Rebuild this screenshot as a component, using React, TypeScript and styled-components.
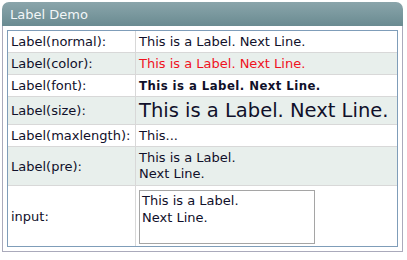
import React from "react";
import styled, { createGlobalStyle } from "styled-components";

const GlobalStyle = createGlobalStyle`
  body {
    margin: 0;
    background: #ffffff;
    font-family: "DejaVu Sans", Verdana, sans-serif;
  }
`;

type Row = {
  label: string;
  kind: "normal" | "color" | "font" | "size" | "maxlength" | "pre" | "input";
};

const rows: Row[] = [
  { label: "Label(normal):", kind: "normal" },
  { label: "Label(color):", kind: "color" },
  { label: "Label(font):", kind: "font" },
  { label: "Label(size):", kind: "size" },
  { label: "Label(maxlength):", kind: "maxlength" },
  { label: "Label(pre):", kind: "pre" },
  { label: "input:", kind: "input" },
];

const text = "This is a Label. Next Line.";

export default function App() {
  return (
    <>
      <GlobalStyle />
      <Panel>
        <Title>Label Demo</Title>
        <Body>
          <Table>
            <tbody>
              {rows.map((row, i) => (
                <tr key={row.kind}>
                  <LabelCell $alt={i % 2 === 1}>{row.label}</LabelCell>
                  <ValueCell $alt={i % 2 === 1} $kind={row.kind}>
                    {row.kind === "maxlength" && "This..."}
                    {row.kind === "pre" && (
                      <>
                        This is a Label.
                        <br />
                        Next Line.
                      </>
                    )}
                    {row.kind === "input" && (
                      <TextBox
                        readOnly
                        defaultValue={"This is a Label.\nNext Line."}
                      />
                    )}
                    {row.kind !== "maxlength" &&
                      row.kind !== "pre" &&
                      row.kind !== "input" &&
                      text}
                  </ValueCell>
                </tr>
              ))}
            </tbody>
          </Table>
        </Body>
      </Panel>
    </>
  );
}

const Panel = styled.div`
  width: 401px;
  margin: 2px 0 0 2px;
`;

const Title = styled.div`
  height: 24px;
  padding-left: 8px;
  display: flex;
  align-items: center;
  border-radius: 7px 7px 0 0;
  background: linear-gradient(#8aa5ab, #6a8b91);
  color: #f2f6f7;
  font-size: 13px;
`;

const Body = styled.div`
  padding: 4px;
  border: 1px solid #aaaabb;
  border-top: none;
`;

const Table = styled.table`
  width: 100%;
  border-collapse: separate;
  border-spacing: 0;
  border: 1px solid #7f9db9;
  font-size: 13px;
  color: #10102a;

  tr:last-child td {
    border-bottom: none;
  }
`;

const Cell = styled.td<{ $alt: boolean }>`
  padding: 3px 3px;
  line-height: 15px;
  border-bottom: 1px solid #d8d8d8;
  background: ${(p) => (p.$alt ? "#e8efec" : "#ffffff")};
  vertical-align: middle;
  white-space: nowrap;
`;

const LabelCell = styled(Cell)`
  width: 121px;
  border-right: 1px solid #d8d8d8;
`;

const ValueCell = styled(Cell)<{ $kind: Row["kind"] }>`
  color: ${(p) => (p.$kind === "color" ? "#f0121e" : "#10102a")};
  font-family: ${(p) =>
    p.$kind === "font"
      ? `"DejaVu Sans Condensed", "DejaVu Sans", sans-serif`
      : `"DejaVu Sans", Verdana, sans-serif`};
  font-weight: ${(p) => (p.$kind === "font" ? "bold" : "normal")};
  letter-spacing: ${(p) => (p.$kind === "font" ? "0.45px" : "normal")};
  font-size: ${(p) => (p.$kind === "size" ? "19.5px" : "13px")};
  line-height: ${(p) =>
    p.$kind === "size" ? "21px" : p.$kind === "pre" ? "16px" : "15px"};
  padding-top: ${(p) => (p.$kind === "input" ? "4px" : "3px")};
  padding-bottom: ${(p) => (p.$kind === "input" ? "2px" : "3px")};
`;

const TextBox = styled.textarea`
  display: block;
  box-sizing: border-box;
  width: 176px;
  height: 54px;
  margin: 0;
  padding: 1px 2px;
  border: 1px solid #a5a5a5;
  resize: none;
  font-family: "DejaVu Sans", Verdana, sans-serif;
  font-size: 13px;
  line-height: 17px;
  color: #10102a;
  overflow: hidden;
`;
